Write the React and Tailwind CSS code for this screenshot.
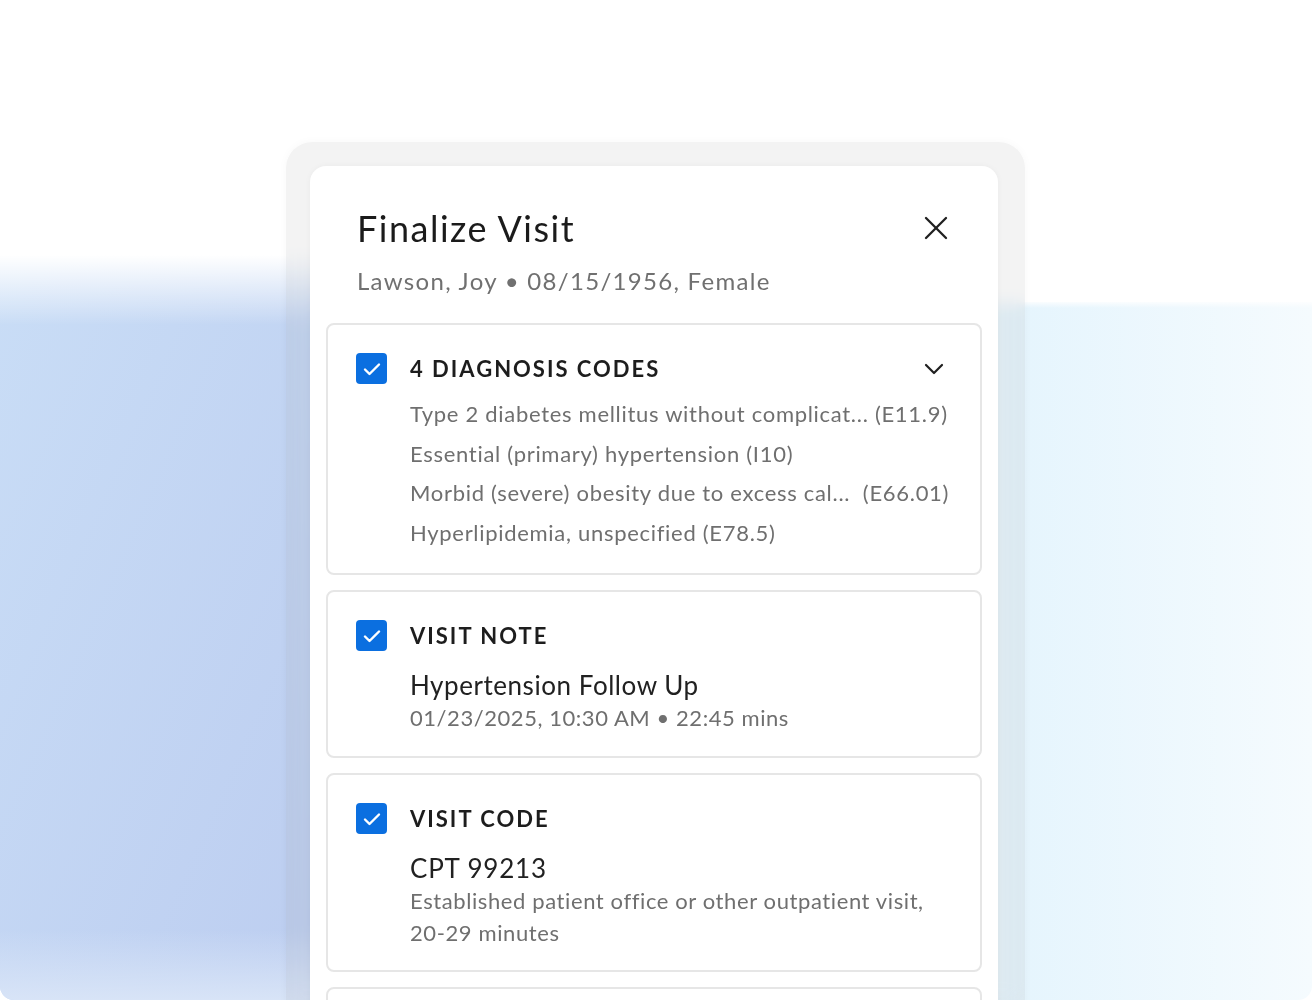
import React from 'react';

const diagnoses = [
  { name: 'Type 2 diabetes mellitus without complicat...', code: ' (E11.9)' },
  { name: 'Essential (primary) hypertension', code: ' (I10)' },
  { name: 'Morbid (severe) obesity due to excess cal...', code: '  (E66.01)' },
  { name: 'Hyperlipidemia, unspecified', code: ' (E78.5)' },
];

function CheckBox() {
  return (
    <div className="flex h-[31px] w-[31px] shrink-0 items-center justify-center rounded-[4px] bg-[#0b6fe0]">
      <svg width="18" height="14" viewBox="0 0 18 14" fill="none">
        <polyline points="2,7.5 6.5,12 16,2.5" stroke="white" strokeWidth="2.4" strokeLinecap="round" strokeLinejoin="round" />
      </svg>
    </div>
  );
}

function Section({ title, right, children, className }) {
  return (
    <div className={'rounded-[8px] border-2 border-[#e6e6e6] bg-white pl-[28px] pr-[28px] pt-[28px] ' + className}>
      <div className="flex items-center">
        <CheckBox />
        <div className="ml-[23px] flex-1 text-[22px] font-bold leading-[28px] tracking-[2px] text-[#1d1d1d]">{title}</div>
        {right}
      </div>
      <div className="pl-[54px]">{children}</div>
    </div>
  );
}

export default function App() {
  return (
    <div className="relative h-[1000px] w-full overflow-hidden bg-white font-['Lato',sans-serif]">
      {/* background shapes */}
      <div className="absolute left-0 top-[255px] h-[745px] w-[330px] overflow-hidden rounded-bl-[14px] bg-gradient-to-br from-[#c9ddf6] to-[#bccdf0]">
        <div className="h-[70px] bg-gradient-to-b from-white to-white/0" />
        <div className="absolute bottom-0 left-0 right-0 h-[70px] bg-gradient-to-b from-white/0 to-[#d8e4f7]" />
      </div>
      <div className="absolute right-0 top-[302px] h-[698px] w-[320px] overflow-hidden rounded-br-[14px] bg-gradient-to-r from-[#e4f4fd] to-[#f5fbfe]">
        <div className="h-[6px] bg-gradient-to-b from-white/80 to-white/0" />
      </div>

      <div className="relative pl-[286px] pt-[142px]">
        <div className="w-[739px] rounded-[26px] bg-[#9a9a9a]/[0.12] pl-[24px] pt-[24px] shadow-[0_0_10px_rgba(0,0,0,0.03)] backdrop-blur-sm">
          <div className="w-[688px] rounded-t-[16px] bg-white px-[16px] pb-[40px] pt-[40px] shadow-[0_0_6px_rgba(0,0,0,0.04)]">
            <div className="flex items-center justify-between pl-[31px] pr-[34px]">
              <h1 className="text-[36px] font-normal leading-[44px] tracking-[1.5px] text-[#1b1b1b]">Finalize Visit</h1>
              <svg width="24" height="24" viewBox="0 0 24 24" fill="none">
                <line x1="2" y1="2" x2="22" y2="22" stroke="#1f1f1f" strokeWidth="2.3" strokeLinecap="round" />
                <line x1="22" y1="2" x2="2" y2="22" stroke="#1f1f1f" strokeWidth="2.3" strokeLinecap="round" />
              </svg>
            </div>
            <p className="mt-[15px] pl-[31px] text-[24px] leading-[32px] tracking-[1.3px] text-[#707070]">Lawson, Joy • 08/15/1956, Female</p>

            <div className="mt-[26px] flex flex-col gap-[15px]">
              <Section
                title="4 DIAGNOSIS CODES"
                className="pb-[21px]"
                right={
                  <svg width="20" height="12" viewBox="0 0 20 12" fill="none" className="mr-[8px]">
                    <polyline points="2,2 10,10 18,2" stroke="#1f1f1f" strokeWidth="2.2" strokeLinecap="round" strokeLinejoin="round" />
                  </svg>
                }
              >
                <div className="mt-[10px] text-[22px] leading-[39.5px] tracking-[0.7px] text-[#6f6f6f]">
                  {diagnoses.map((d) => (
                    <div key={d.code} className="flex">
                      <span className="min-w-0 truncate">{d.name}</span>
                      <span className="shrink-0 whitespace-pre">{d.code}</span>
                    </div>
                  ))}
                </div>
              </Section>

              <Section title="VISIT NOTE" className="pb-[22px]">
                <div className="mt-[17px] text-[26px] leading-[34px] tracking-[0.55px] text-[#212121]">Hypertension Follow Up</div>
                <div className="text-[22px] leading-[32px] tracking-[0.55px] text-[#6f6f6f]">01/23/2025, 10:30 AM • 22:45 mins</div>
              </Section>

              <Section title="VISIT CODE" className="pb-[21px]">
                <div className="mt-[17px] text-[26px] leading-[34px] tracking-[0.8px] text-[#212121]">CPT 99213</div>
                <div className="text-[22px] leading-[32px] tracking-[0.6px] text-[#6f6f6f]">
                  Established patient office or other outpatient visit,
                  <br />
                  20-29 minutes
                </div>
              </Section>

              <Section title="SIGNATURE" className="pb-[20px]">
                <div className="mt-[17px] text-[26px] leading-[34px] text-[#212121]">Dr. Signature</div>
              </Section>
            </div>
          </div>
        </div>
      </div>
    </div>
  );
}
